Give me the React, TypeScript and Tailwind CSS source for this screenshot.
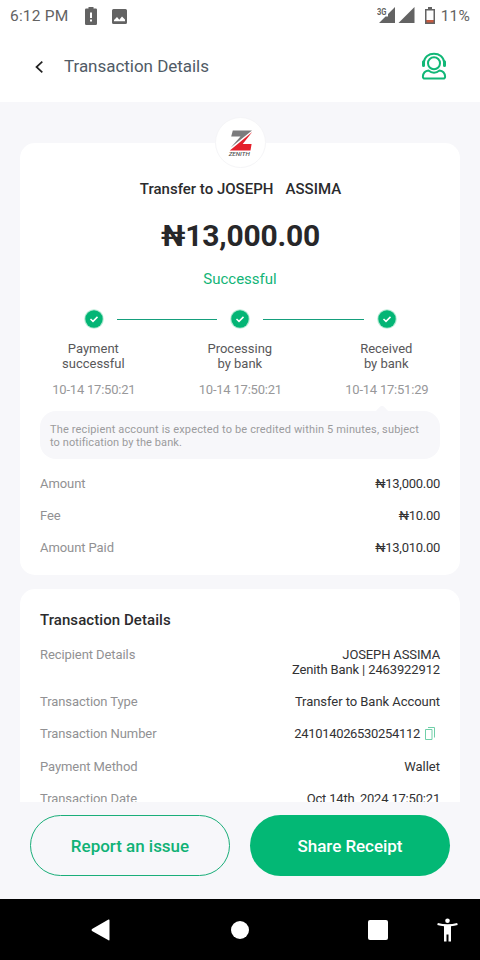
import { Fragment } from "react"

type Step = {
  title: string[]
  time: string
}

type Row = {
  label: string
  lines: string[]
  height: string
  tracking?: string
  copy?: boolean
}

const steps: Step[] = [
  { title: ["Payment", "successful"], time: "10-14 17:50:21" },
  { title: ["Processing", "by bank"], time: "10-14 17:50:21" },
  { title: ["Received", "by bank"], time: "10-14 17:51:29" },
]

const amounts: Row[] = [
  { label: "Amount", lines: ["₦13,000.00"], height: "h-8", tracking: "tracking-[-0.27px]" },
  { label: "Fee", lines: ["₦10.00"], height: "h-8", tracking: "tracking-[-0.27px]" },
  { label: "Amount Paid", lines: ["₦13,010.00"], height: "h-8", tracking: "tracking-[-0.27px]" },
]

const details: Row[] = [
  {
    label: "Recipient Details",
    lines: ["JOSEPH ASSIMA", "Zenith Bank | 2463922912"],
    height: "h-[47px]",
    tracking: "tracking-[-0.13px]",
  },
  { label: "Transaction Type", lines: ["Transfer to Bank Account"], height: "h-8", tracking: "tracking-[-0.05px]" },
  {
    label: "Transaction Number",
    lines: ["241014026530254112"],
    height: "h-[33px]",
    tracking: "tracking-[-0.32px]",
    copy: true,
  },
  { label: "Payment Method", lines: ["Wallet"], height: "h-8" },
  {
    label: "Transaction Date",
    lines: ["Oct 14th, 2024 17:50:21"],
    height: "h-8",
    tracking: "tracking-[-0.19px]",
  },
]

function StatusBar() {
  return (
    <div className="flex h-8 items-center justify-between pl-[10px] pr-[10px] text-[#636363]">
      <div className="flex items-center">
        <span className="w-[75px] text-[15.5px] leading-8 tracking-[0.2px]">6:12 PM</span>
        <svg width="12" height="18" viewBox="0 0 12 18" fill="currentColor">
          <path
            fillRule="evenodd"
            d="M3.5 0h5v1.5h2A1.3 1.3 0 0 1 12 2.8v13.9a1.3 1.3 0 0 1-1.3 1.3H1.3A1.3 1.3 0 0 1 0 16.7V2.8a1.3 1.3 0 0 1 1.3-1.3h2.2zM5 5.5v5.5h2V5.5zM5 12.5v2h2v-2z"
          />
        </svg>
        <svg className="ml-[15px]" width="15" height="15" viewBox="0 0 15 15" fill="currentColor">
          <path
            fillRule="evenodd"
            d="M1.5 0h12A1.5 1.5 0 0 1 15 1.5v12a1.5 1.5 0 0 1-1.5 1.5h-12A1.5 1.5 0 0 1 0 13.5v-12A1.5 1.5 0 0 1 1.5 0zM2 12.3h11V10.5L10 7.5 7.3 10.800 5 8 2 11z"
          />
        </svg>
      </div>
      <div className="flex items-center">
        <svg className="-mt-0.5" width="38" height="18" viewBox="0 0 38 18" fill="currentColor">
          <path d="M18 1v16H2L8.500 10.500H11V8z" />
          <path d="M37.500 1v16h-16z" />
          <text
            x="0"
            y="8.500"
            fontSize="9"
            fontWeight="700"
            fontFamily="Roboto, sans-serif"
            textLength="9.500"
            lengthAdjust="spacingAndGlyphs"
          >
            3G
          </text>
        </svg>
        <svg className="-mt-[2px] ml-[10px]" width="10" height="17" viewBox="0 0 10 17">
          <path d="M3 0h4v2h3v15H0V2h3z" fill="#636363" />
          <path d="M1.500 3.500h7v9.500h-7z" fill="#fff" />
          <path d="M1.500 13h7v2.500h-7z" fill="#c65a41" />
        </svg>
        <span className="ml-[6px] text-[15.5px] leading-8 tracking-[0.2px]">11%</span>
      </div>
    </div>
  )
}

function Header() {
  return (
    <header className="flex h-[70px] items-center pb-[2px] pl-[35px] pr-[33px]">
      <svg className="mt-px" width="9" height="12" viewBox="0 0 9 12" fill="none" stroke="#222" strokeWidth="1.7">
        <path d="M7.3.7 1.5 6l5.800 5.300" />
      </svg>
      <h1 className="ml-5 flex-1 text-[17px] leading-6 tracking-[-0.03px] text-[#515b66]">Transaction Details</h1>
      <svg width="26" height="28" viewBox="0 0 26 28" fill="none" stroke="#11b777" strokeWidth="2">
        <circle cx="13" cy="11.3" r="6" />
        <path d="M2.8 10.5C3.3 4.8 7.8 1.7 13 1.7s9.700 3.100 10.200 8.800" />
        <path d="M2.5 9.8v3.700M23.5 9.8v3.700" strokeWidth="3" strokeLinecap="round" />
        <path
          d="M7.5 18.5c1.700 1.500 3.400 2.200 5.500 2.200s3.800-.7 5.500-2.200c3.400.3 5.300 2.600 5.600 6 .1 1.200-.7 2-1.900 2H3.800c-1.200 0-2-.8-1.900-2 .3-3.400 2.200-5.700 5.600-6z"
          strokeLinejoin="round"
        />
      </svg>
    </header>
  )
}

function BankLogo() {
  return (
    <div className="absolute -top-[26px] left-[195px] flex size-[51px] items-center justify-center rounded-full border border-[#f5f5f7] bg-white">
      <svg width="26" height="28" viewBox="0 0 26 28">
        <path d="M4.800 1.500H24L2.800 18.500 12.500 7.500H3.200z" fill="#7b7b7d" />
        <path d="M24.200 3 14.700 15h8.900l-1.100 6.500H1.800z" fill="#e4202b" />
        <text
          x=".7"
          y="27.3"
          fontSize="5.8"
          fontWeight="500"
          fontStyle="italic"
          fontFamily="Roboto, sans-serif"
          textLength="21"
          lengthAdjust="spacingAndGlyphs"
          fill="#555"
        >
          ZENITH
        </text>
      </svg>
    </div>
  )
}

function Steps() {
  return (
    <div className="mt-5 grid grid-cols-3 pl-[0.6px]">
      {steps.map((s, i) => (
        <div key={s.title[0]} className="text-center">
          <div className="flex h-5 items-center">
            <span className={`h-px flex-1 ${i > 0 ? "bg-[#159f7c]" : ""}`} />
            <svg className="mx-[13px]" width="20" height="20" viewBox="0 0 20 20">
              <circle cx="10" cy="10" r="9.8" fill="#b5ead4" />
              <circle cx="10" cy="10" r="8.7" fill="#03b575" />
              <path d="m6.500 10 2.500 2.400 4.500-4.500" fill="none" stroke="#fff" strokeWidth="1.5" />
            </svg>
            <span className={`h-px flex-1 ${i < steps.length - 1 ? "bg-[#159f7c]" : ""}`} />
          </div>
          <p className="mt-3 pr-px text-[13px] leading-[15px] text-[#58585a]">
            {s.title.map((line) => (
              <span key={line} className="block">{line}</span>
            ))}
          </p>
          <p className="mt-[11px] text-[13px] leading-[15px] tracking-[-0.22px] text-[#98989a]">{s.time}</p>
        </div>
      ))}
    </div>
  )
}

function InfoRow({ row }: { row: Row }) {
  return (
    <div className={`flex justify-between text-[13px] leading-[15px] ${row.height}`}>
      <span className="tracking-[-0.08px] text-[#919193]">{row.label}</span>
      <span className={`flex text-right text-[#323234] ${row.tracking ?? ""}`}>
        <span>
          {row.lines.map((line, i) => (
            <Fragment key={line}>
              {i > 0 && <br />}
              {line}
            </Fragment>
          ))}
        </span>
        {row.copy && (
          <svg className="ml-[5px] mr-[5px] mt-px" width="10" height="13" viewBox="0 0 10 13" fill="none" stroke="#70cfa9">
            <path d="M.5 2.500h6.500v10H.5z" />
            <path d="M3 .5h6.500v10" />
          </svg>
        )}
      </span>
    </div>
  )
}

export default function App() {
  return (
    <div className="flex h-[960px] w-[480px] flex-col overflow-hidden bg-white font-['Roboto',sans-serif]">
      <StatusBar />
      <Header />
      <main className="h-[700px] overflow-hidden bg-[#f7f7fa] px-5 pt-[41px]">
        <section className="relative h-[432px] rounded-[15px] bg-white pt-[36px]">
          <BankLogo />
          <p className="whitespace-pre pl-px text-center text-[15px] leading-5 font-medium text-[#2b2b2d]">
            Transfer to JOSEPH <span className="ml-[1px]">{"  "}ASSIMA</span>
          </p>
          <p className="mt-[19px] pl-px text-center text-[30px] leading-9 font-bold tracking-[-0.2px] text-[#272729]">
            ₦13,000.00
          </p>
          <p className="mt-[15px] text-center text-[15px] leading-5 text-[#12b477]">Successful</p>
          <Steps />
          <div className="relative mx-5 mt-[14px] h-12 rounded-[16px] bg-[#f7f7fa] px-[10px] pt-3 text-[11px] leading-[13px] tracking-[0.15px] text-[#9b9b9d]">
            <span className="absolute -top-1 left-[337px] size-[10px] rotate-45 rounded-[2px] bg-[#f7f7fa]" />
            <p className="whitespace-nowrap">
              The recipient account is expected to be credited within 5 minutes, subject
              <br />
              <span className="tracking-[0.08px]">to notification by the bank.</span>
            </p>
          </div>
          <div className="mt-[17px] px-5">
            {amounts.map((row) => (
              <InfoRow key={row.label} row={row} />
            ))}
          </div>
        </section>
        <section className="mt-[14px] rounded-[15px] bg-white px-5 pt-[21px]">
          <h2 className="mb-[15px] text-[15px] leading-5 font-medium tracking-[0.07px] text-[#2b2b2d]">
            Transaction Details
          </h2>
          <div className="pt-[2px]">
            {details.map((row) => (
              <InfoRow key={row.label} row={row} />
            ))}
          </div>
        </section>
      </main>
      <div className="flex h-[97px] gap-5 bg-[#f7f7fa] px-[30px] pt-[13px]">
        <button className="h-[61px] w-[200px] rounded-full border border-[#1aae79] pt-[2px] text-[17px] font-medium tracking-[-0.02px] text-[#10b276]">
          Report an issue
        </button>
        <button className="h-[61px] w-[200px] rounded-full bg-[#03b875] pt-[2px] text-[17px] font-medium tracking-[-0.05px] text-white">
          Share Receipt
        </button>
      </div>
      <nav className="flex h-[61px] items-center bg-black pl-[91px] text-white">
        <svg width="19" height="22" viewBox="0 0 19 22" fill="currentColor">
          <path d="M17.500.6Q18.500 0 18.500 1.500v19q0 1.300-1 .7L1 12Q0 11 1 10z" />
        </svg>
        <span className="ml-[121px] size-[18px] rounded-full bg-white" />
        <span className="ml-[119px] size-5 rounded-[2px] bg-white" />
        <svg className="ml-[49px]" width="21" height="24" viewBox="0 0 21 24" fill="currentColor">
          <circle cx="10.5" cy="2.7" r="2.3" />
          <path d="M.8 5c6.500 1.700 12.900 1.700 19.400 0l.5 2c-2.200.6-4.500 1-6.700 1.200V23.500h-2.500v-7h-2v7H7V8.200C4.800 8 2.500 7.600.3 7z" />
        </svg>
      </nav>
    </div>
  )
}
